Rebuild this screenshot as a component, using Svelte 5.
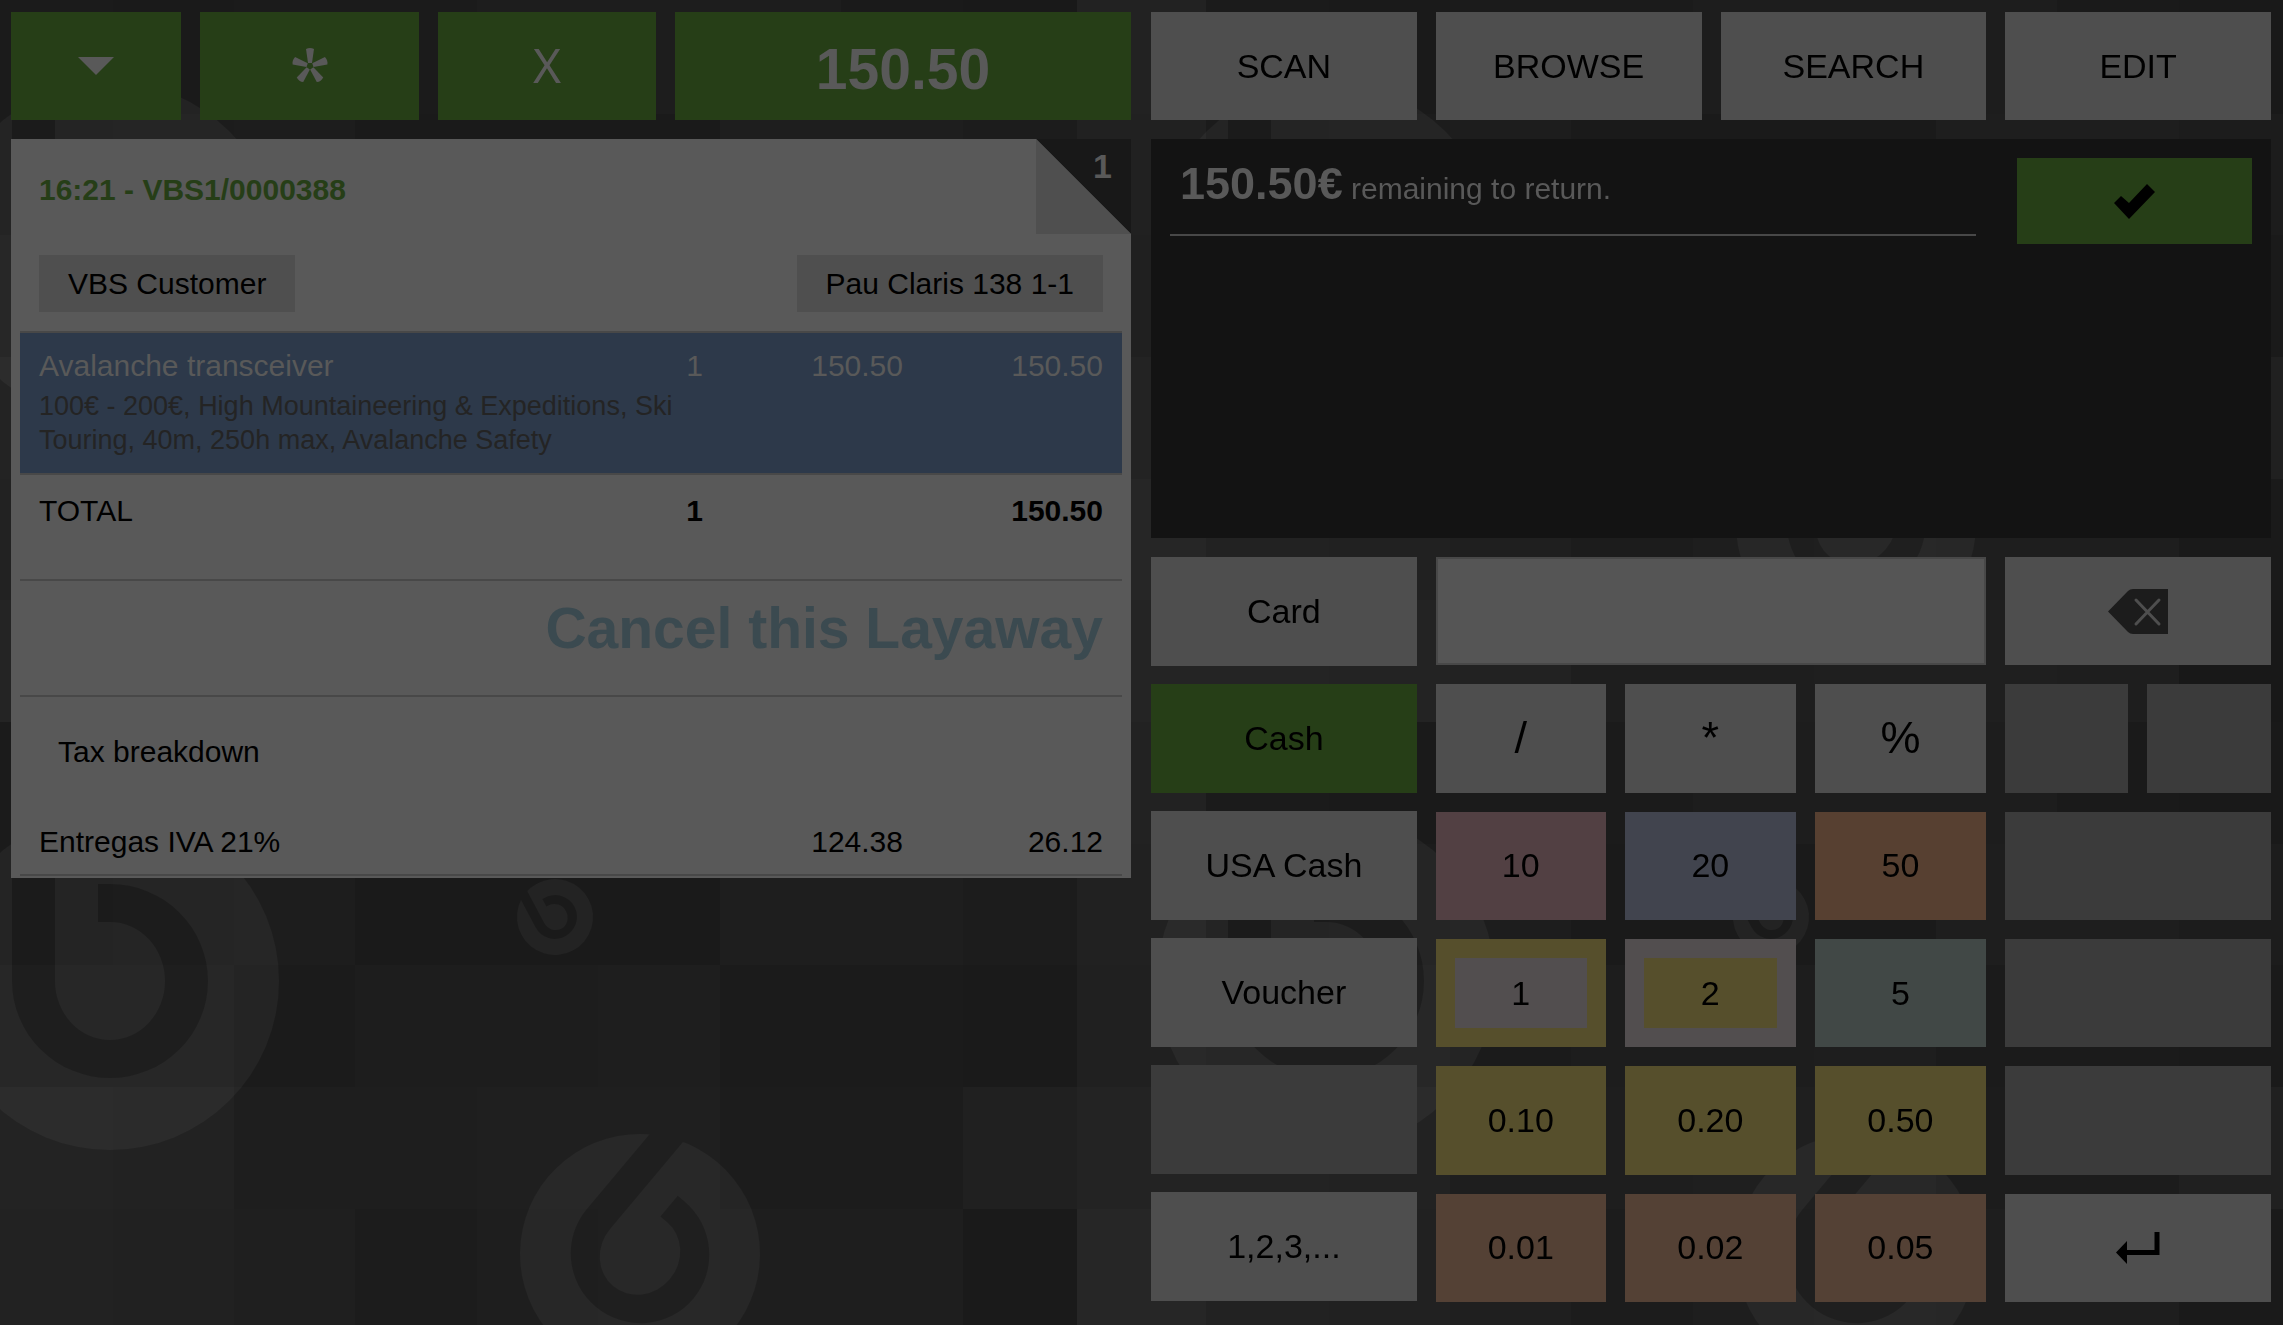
<script>
  const modes = ['SCAN', 'BROWSE', 'SEARCH', 'EDIT'];
  const methods = [
    { label: 'Card' },
    { label: 'Cash', tone: 'green' },
    { label: 'USA Cash' },
    { label: 'Voucher' },
    { label: '', tone: 'off' },
    { label: '1,2,3,...' }
  ];
  const keys = [
    [{ t: '/', c: 'op' }, { t: '*', c: 'op' }, { t: '%', c: 'op' }],
    [{ t: '10', c: 'rose' }, { t: '20', c: 'slate' }, { t: '50', c: 'orange' }],
    [{ t: '1', c: 'coin1' }, { t: '2', c: 'coin2' }, { t: '5', c: 'teal' }],
    [{ t: '0.10', c: 'gold' }, { t: '0.20', c: 'gold' }, { t: '0.50', c: 'gold' }],
    [{ t: '0.01', c: 'copper' }, { t: '0.02', c: 'copper' }, { t: '0.05', c: 'copper' }]
  ];

  // Checkered backdrop: one repeat of the pattern, as grey levels per cell
  const xs = [0, 123, 244, 365, 487, 608, 730, 851, 973, 1087, 1216];
  const greys = [
    [27, 26, 27, 27, 29, 29, 29, 26, 25, 34],
    [27, 28, 29, 26, 26, 26, 30, 30, 28, 33],
    [30, 30, 27, 29, 29, 30, 27, 27, 26, 32],
    [35, 34, 30, 30, 31, 31, 28, 28, 32, 35],
    [34, 33, 31, 28, 30, 31, 30, 30, 26, 38],
    [36, 35, 34, 30, 30, 31, 31, 30, 24, 36]
  ];
  const cells = greys.flatMap((row, r) =>
    row.map((g, c) => ({ x: xs[c], y: (r * 730) / 6, w: xs[c + 1] - xs[c], fill: `rgb(${g},${g},${g})` }))
  );
  const logos = [
    'translate(120 259)',
    'translate(1336 259)',
    'translate(565 195) rotate(-28) scale(.225)',
    'translate(650 532) rotate(40) scale(.71)'
  ];
</script>

<svg class="backdrop" aria-hidden="true">
  <defs>
    <mask id="cut" maskUnits="userSpaceOnUse" x="-170" y="-170" width="340" height="340">
      <circle r="169" fill="#fff" />
      <path d="M-98-180V0A98 97 0 0 0 0 97A98 97 0 0 0 98 0A98 97 0 0 0 0-97H-12V-59H0A55 59 0 0 1 55 0A55 59 0 0 1 0 59A55 59 0 0 1-55 0V-180Z" fill="#000" />
    </mask>
    <pattern id="tiles" x="-10" y="-8" width="1216" height="730" patternUnits="userSpaceOnUse">
      {#each cells as c}
        <rect x={c.x} y={c.y} width={c.w} height="122" fill={c.fill} shape-rendering="crispEdges" />
      {/each}
      {#each logos as t}
        <g transform={t}><rect x="-170" y="-170" width="340" height="340" fill="#fff" fill-opacity=".04" mask="url(#cut)" /></g>
      {/each}
    </pattern>
  </defs>
  <rect width="100%" height="100%" fill="url(#tiles)" />
</svg>

<main class="pos">
  <section class="col" aria-label="Receipt">
    <div class="bar left">
      <button class="green light" aria-label="Menu">
        <svg width="36" height="18" viewBox="0 0 36 18"><path d="M0 0H36L18 18Z" fill="currentColor" /></svg>
      </button>
      <button class="green light" aria-label="Favourite">
        <svg width="38" height="38" viewBox="-19 -19 38 38">
          {#each [0, 72, 144, 216, 288] as a}
            <path d="M-2-3L-4-17Q0-19 4-17L2-3Z" transform={`rotate(${a})`} fill="currentColor" />
          {/each}
        </svg>
      </button>
      <button class="green light multiply">X</button>
      <button class="green light total">150.50</button>
    </div>

    <div class="receipt">
      <div class="corner">
        <svg viewBox="0 0 95 95" aria-hidden="true"><path d="M0 0H95V95Z" fill="#181818" /><path d="M0 0V95H95Z" fill="#4f4f4f" /></svg>
        <b>1</b>
      </div>
      <h1>16:21 - VBS1/0000388</h1>
      <div class="chips">
        <button>VBS Customer</button>
        <button>Pau Claris 138 1-1</button>
      </div>
      <table>
        <colgroup><col /><col class="qty" /><col class="price" /><col class="amount" /></colgroup>
        <tbody>
          <tr class="item">
            <td>Avalanche transceiver
              <p>100€ - 200€, High Mountaineering &amp; Expeditions, Ski Touring, 40m, 250h max, Avalanche Safety</p>
            </td>
            <td>1</td><td>150.50</td><td>150.50</td>
          </tr>
          <tr class="sum"><td>TOTAL</td><td><b>1</b></td><td></td><td><b>150.50</b></td></tr>
          <tr class="cancel"><td colspan="4"><a href="#cancel">Cancel this Layaway</a></td></tr>
          <tr class="taxhead"><td colspan="4">Tax breakdown</td></tr>
          <tr class="tax"><td>Entregas IVA 21%</td><td></td><td>124.38</td><td>26.12</td></tr>
        </tbody>
      </table>
    </div>
  </section>

  <section class="col" aria-label="Payment">
    <div class="bar right">
      {#each modes as m}<button>{m}</button>{/each}
    </div>

    <div class="status">
      <p><b>150.50€</b> remaining to return.</p>
      <button class="green" aria-label="Confirm">
        <svg width="41" height="35" viewBox="0 0 41 35"><path d="M0 19L7 12L15 19L33 0L41 8L15 35Z" fill="currentColor" /></svg>
      </button>
    </div>

    <div class="keypad">
      <div class="methods">
        {#each methods as m}
          <button class={m.tone} disabled={m.tone === 'off'} aria-label={m.label || 'Unused'}>{m.label}</button>
        {/each}
      </div>
      <div class="keys">
        <input aria-label="Amount" />
        <button aria-label="Backspace">
          <svg width="60" height="45" viewBox="0 0 60 45"><path d="M0 22.5L20 2Q22 0 25 0H60V45H25Q22 45 20 43Z" fill="#1c1c1c" /><path d="M28 11L51 35M51 11L28 35" stroke="#4e4e4e" stroke-width="3" stroke-linecap="round" /></svg>
        </button>
        {#each keys as row, i}
          {#each row as k}<button class={k.c}>{k.t}</button>{/each}
          {#if i === 0}
            <div class="pair">
              <button class="off" disabled aria-label="Unused"></button>
              <button class="off" disabled aria-label="Unused"></button>
            </div>
          {:else if i === 4}
            <button aria-label="Enter">
              <svg width="44" height="32" viewBox="0 0 44 32"><path d="M38.500 0H43.500V23H11V32L0 20.500L11 9V18H38.500Z" fill="currentColor" /></svg>
            </button>
          {:else}
            <button class="off" disabled aria-label="Unused"></button>
          {/if}
        {/each}
      </div>
    </div>
  </section>
</main>

<style>
  :global(body) { margin: 0; background: #1e1e1e; }
  .backdrop { position: fixed; inset: 0; width: 100%; height: 100%; }
  .pos {
    position: relative;
    box-sizing: border-box;
    min-height: 100vh;
    padding: 12px 12px 23px 11px;
    display: grid;
    grid-template-columns: minmax(0, 1fr) minmax(0, 1fr);
    gap: 20px;
    font-family: "Liberation Sans", Arial, sans-serif;
    font-size: 30px;
    line-height: 34px;
    color: #000;
  }
  .col { display: flex; flex-direction: column; gap: 19px; }
  .bar { display: grid; gap: 19px; height: 108px; }
  .left { grid-template-columns: 170fr 219fr 218fr 456fr; }
  .right { grid-template-columns: repeat(4, 1fr); }

  button {
    display: flex;
    align-items: center;
    justify-content: center;
    box-sizing: border-box;
    min-width: 0;
    padding: 0;
    border: 0;
    border-radius: 0;
    background: #4e4e4e;
    color: #000;
    font: 34px "Liberation Sans", Arial, sans-serif;
  }
  .green { background: #263e17; }
  .light { color: #595959; }
  .off { background: #3b3b3b; }
  .op { font-size: 45px; }
  .multiply { padding-bottom: 4px; font-family: "Noto Sans", sans-serif; font-size: 48px; }
  .total { font-size: 57px; font-weight: bold; padding-top: 6px; }

  .receipt { position: relative; padding: 34px 9px 2px; background: #595959; }
  .corner { position: absolute; top: 0; right: 0; width: 95px; height: 95px; }
  .corner svg { display: block; }
  .corner b { position: absolute; top: 10px; right: 19px; font-size: 34px; color: #595959; }
  h1 { margin: 0 19px 48px; font-size: 30px; line-height: 34px; color: #263e17; }
  .chips { display: flex; justify-content: space-between; margin: 0 19px 19px; }
  .chips button { height: 57px; padding: 0 29px; font-size: 30px; background: #4f4f4f; }

  table { width: 100%; border-collapse: separate; border-spacing: 0; table-layout: fixed; }
  .qty { width: 30px; }
  .price { width: 200px; }
  .amount { width: 219px; }
  td { padding: 0; vertical-align: top; text-align: right; border-bottom: 2px solid #484848; }
  td:first-child { padding-left: 19px; text-align: left; }
  td:last-child { padding-right: 19px; }
  .item td { padding-top: 16px; padding-bottom: 16px; border-top: 2px solid #484848; background: #2d394a; color: #595959; }
  .item p { margin: 6px 0 0; font-size: 27px; color: #242424; }
  .sum td { padding-top: 19px; padding-bottom: 51px; }
  .cancel td:first-child { padding-top: 14px; padding-bottom: 34px; font-size: 57px; line-height: 66px; font-weight: bold; text-align: right; }
  .cancel a { color: #3b4a50; text-decoration: none; }
  .taxhead td:first-child { padding: 38px 38px 56px; border-bottom: 0; }
  .tax td { padding-bottom: 15px; }

  .status { flex: 399 0 399px; display: flex; align-items: flex-start; gap: 41px; box-sizing: border-box; padding: 19px; background: #131313; }
  .status p { flex: 1; margin: 0; padding: 0 10px 19px; border-bottom: 2px solid #484848; line-height: 52px; color: #595959; }
  .status b { font-size: 45px; }
  .status button { width: 235px; height: 86px; }

  .keypad { flex: 745 0 745px; display: grid; grid-template-columns: 266fr 836fr; gap: 19px; }
  .methods { display: grid; grid-auto-rows: 1fr; gap: 18px; margin-bottom: 1px; }
  .keys { display: grid; grid-template-columns: 170fr 171fr 171fr 266fr; grid-auto-rows: 1fr; gap: 19px; }
  input {
    grid-column: span 3;
    box-sizing: border-box;
    width: 100%;
    min-width: 0;
    padding: 0 19px;
    border: 2px solid #484848;
    border-radius: 0;
    background: #555;
    font: 34px "Liberation Sans", Arial, sans-serif;
  }
  .pair { display: grid; grid-template-columns: 1fr 1fr; gap: 19px; }
  .rose { background: #524043; }
  .slate { background: #41444e; }
  .orange { background: #574031; }
  .teal { background: #414846; }
  .gold { background: #564f2c; }
  .copper { background: #544135; }
  .coin1 { background: #524e4f; border: 19px solid #564f2c; }
  .coin2 { background: #564f2c; border: 19px solid #524e4f; }
</style>
